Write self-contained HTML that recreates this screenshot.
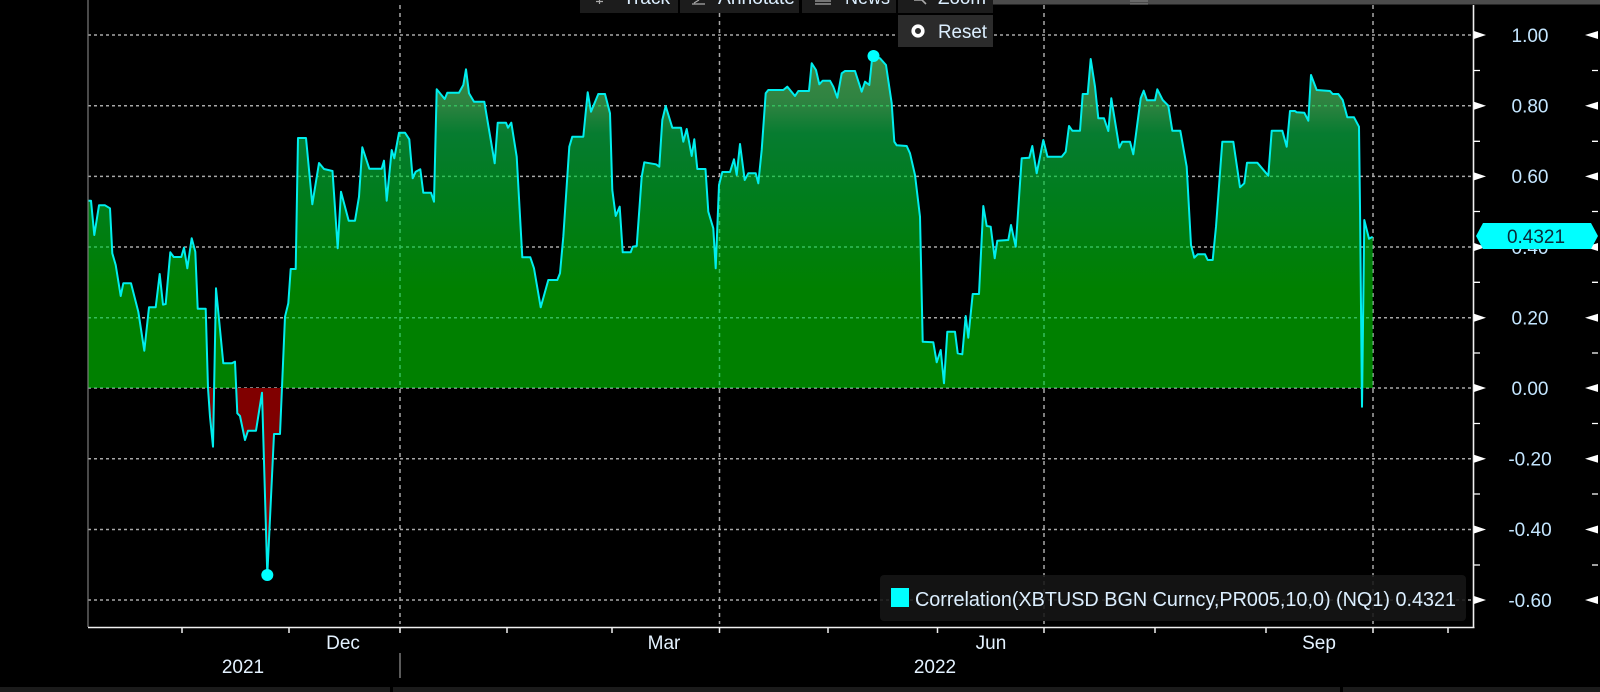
<!DOCTYPE html>
<html>
<head>
<meta charset="utf-8">
<style>
html,body{margin:0;padding:0;background:#000;width:1600px;height:692px;overflow:hidden}
svg{display:block;filter:blur(0.35px)}
text{font-family:"Liberation Sans",sans-serif;font-size:19px;fill:#dcefff}
.y{text-anchor:middle;fill:#c4e6ff}
.x{text-anchor:middle;fill:#e4f2ff}
</style>
</head>
<body>
<svg width="1600" height="692" viewBox="0 0 1600 692" xmlns="http://www.w3.org/2000/svg">
<defs>
<linearGradient id="g" gradientUnits="userSpaceOnUse" x1="0" y1="60" x2="0" y2="290">
<stop offset="0" stop-color="#3f8a46"/>
<stop offset="0.2" stop-color="#2c8240"/>
<stop offset="0.32" stop-color="#067c30"/>
<stop offset="0.6" stop-color="#007d1c"/>
<stop offset="1" stop-color="#008000"/>
</linearGradient>
<path id="area" d="M88,388 L88.3,200.7 91,200.7 94.3,235 99,205.3 105,205.3 110,208.3 112.3,253.3 115.7,265 120.7,296 123.3,283.3 131,283.3 138.3,311.7 144.3,350.7 149,307.3 155.7,307.3 159.7,274 163,304.7 165.7,304 170.3,252.3 173.7,257 181.3,257 184,247.7 187.3,268.3 191.7,238.3 195.3,251.7 197.7,308.7 205.7,308.7 208,388 210,416.7 213,446.7 216,288.3 223.3,363.3 231.7,363.3 235,361.7 237.3,413.3 240,416 245,440 248,430.7 256,430.7 262,392.7 267.3,575 274,434 280,434 285,316.7 288.3,303.3 290.7,269 295.7,269 298,138 306,138 312.3,204.3 319,163 324,169 332.5,171 337.7,248.3 341,191.7 348.7,220.7 355,220.7 359,196.7 362.3,147.3 369.3,168.7 381.7,168.7 384,160.7 386.7,200.7 391.7,150 394.3,158.3 399,132.7 405,132.7 409.3,139.3 412.7,178.3 415.7,171.7 420.3,169.3 423.3,192.7 431,192.7 434,201.7 436.7,89.3 444.7,99 447.3,92.7 459,92.7 463.3,85 466,69.3 469,93.3 474,101.7 484.3,101.7 494.7,163.3 497.7,122.7 506,122.7 508,127.7 511.3,122.7 516.7,156.7 522.3,257.3 530.3,257.3 534,268.3 540.7,307.3 548.3,280 557.3,280 560,273.3 563.3,236.7 569.3,146.7 572.3,136.7 583.3,136.7 587.7,92.3 591,111.7 598.3,94 605,94 610,113.3 612.3,190 615.7,216 619.7,206.7 622.7,252.3 630.7,252.3 632.7,246.7 636.7,246 641.7,176.7 644.3,162.3 656,164.3 659.3,166.7 662.3,120 665.7,106 672.3,127.7 681,127.7 683.3,141.7 686.7,129 691.7,156 694.3,139.3 697.3,169 705.5,169 708.3,211.7 713.3,228.3 715.7,268.3 719,185 722.3,172 730,172 734,159.3 736.7,175 740,144 744.7,180 748.3,173.3 755.7,173.3 758.3,183.3 761.7,150 765.7,93.3 768.3,90 783.3,90 787.3,86.7 795,96 798.3,91 809,91 811.7,63.3 816,70 819.3,84.3 822.7,80.7 830,80.7 833.3,86.7 837.3,97.7 841.7,73.3 845,71 855,71 861.7,91.7 865,81.7 869.3,85 872.3,56.7 873.5,56 880,58.3 886,65 891.7,103.3 894.3,141.7 896.7,145.3 906.7,146 910,153.3 915,175 920,216.7 922.7,341.7 933.3,342.3 936.7,362.3 940.7,350 944,383.3 947.3,331.7 955,331.7 957.7,353.3 962.3,354.3 965.7,316 968.3,337.7 972.7,294 979,294 983.3,206 986.7,226 990.7,226.7 994.7,258.3 997.3,240.7 1008.3,240 1011,225 1015.7,246.7 1021.7,158.3 1029.3,157.7 1032.3,146 1036.7,173.3 1043.3,140 1047.5,156.7 1061.7,156.7 1065.7,151.7 1069,126 1072.3,130.7 1080,130.7 1082.7,94 1087.7,94 1090.7,59 1095,86.7 1098.3,118.3 1104,118.3 1108.3,131 1111.3,98.3 1119.3,147.7 1122.3,141.7 1130,141.7 1133.3,154.3 1140.7,98.3 1143.7,90.7 1147,100.3 1155,100.3 1157.3,89.3 1162.7,100 1168.3,105.7 1172.3,130.7 1180.3,130.7 1186.7,166.7 1191,245 1194.3,257.7 1197.7,254.3 1205,254.3 1207.7,260 1212.7,260 1216,226.7 1222.3,141.7 1233.3,141.7 1240,187.3 1244.3,183.3 1247,162.7 1257.3,162.7 1268.3,175.7 1271.7,130.7 1282.3,130.7 1286.7,146.7 1290,111 1295,111 1296.7,112.3 1304.3,112.7 1308.3,120.7 1311,75 1316.7,90 1330,91 1332.7,94 1338.3,94 1342.7,100 1347.3,117.3 1354,117.3 1359,126.7 1360,206.7 1362,406.7 1364.3,220 1369,238.8 1372.7,236.7 L1372.7,388 Z"/>
<clipPath id="up"><rect x="88" y="0" width="1290" height="388"/></clipPath>
<clipPath id="dn"><rect x="88" y="388" width="1290" height="200"/></clipPath>
<clipPath id="areaClip"><use href="#area"/></clipPath>
<clipPath id="topClip"><rect x="0" y="0" width="1600" height="20"/></clipPath>
<g id="grid">
<path d="M88,35H1473M88,105.7H1473M88,176.4H1473M88,247H1473M88,317.7H1473M88,388H1473M88,458.7H1473M88,529.5H1473M88,600H1473" stroke-dasharray="3 3"/>
<path d="M400,5V624M719.5,5V624M1044,5V624M1373,5V624" stroke-dasharray="4 4"/>
</g>
</defs>

<rect width="1600" height="692" fill="#000"/>

<!-- top bar -->
<rect x="993" y="0" width="607" height="4.5" fill="#4b4b4b"/>
<path d="M1130,1H1148M1130,4H1148" stroke="#8a8a8a" stroke-width="1"/>

<!-- grid -->
<use href="#grid" fill="none" stroke="#a8a8a8" stroke-width="1.5"/>

<!-- fills -->
<g clip-path="url(#up)"><use href="#area" fill="url(#g)"/></g>
<g clip-path="url(#dn)"><use href="#area" fill="#800000"/></g>

<!-- grid over green -->
<g clip-path="url(#up)"><g clip-path="url(#areaClip)">
<use href="#grid" fill="none" stroke="#35bd5c" stroke-width="1.5"/>
</g></g>

<!-- line -->
<polyline fill="none" stroke="#00eeee" stroke-width="2" stroke-linejoin="round" points="88.3,200.7 91,200.7 94.3,235 99,205.3 105,205.3 110,208.3 112.3,253.3 115.7,265 120.7,296 123.3,283.3 131,283.3 138.3,311.7 144.3,350.7 149,307.3 155.7,307.3 159.7,274 163,304.7 165.7,304 170.3,252.3 173.7,257 181.3,257 184,247.7 187.3,268.3 191.7,238.3 195.3,251.7 197.7,308.7 205.7,308.7 208,388 210,416.7 213,446.7 216,288.3 223.3,363.3 231.7,363.3 235,361.7 237.3,413.3 240,416 245,440 248,430.7 256,430.7 262,392.7 267.3,575 274,434 280,434 285,316.7 288.3,303.3 290.7,269 295.7,269 298,138 306,138 312.3,204.3 319,163 324,169 332.5,171 337.7,248.3 341,191.7 348.7,220.7 355,220.7 359,196.7 362.3,147.3 369.3,168.7 381.7,168.7 384,160.7 386.7,200.7 391.7,150 394.3,158.3 399,132.7 405,132.7 409.3,139.3 412.7,178.3 415.7,171.7 420.3,169.3 423.3,192.7 431,192.7 434,201.7 436.7,89.3 444.7,99 447.3,92.7 459,92.7 463.3,85 466,69.3 469,93.3 474,101.7 484.3,101.7 494.7,163.3 497.7,122.7 506,122.7 508,127.7 511.3,122.7 516.7,156.7 522.3,257.3 530.3,257.3 534,268.3 540.7,307.3 548.3,280 557.3,280 560,273.3 563.3,236.7 569.3,146.7 572.3,136.7 583.3,136.7 587.7,92.3 591,111.7 598.3,94 605,94 610,113.3 612.3,190 615.7,216 619.7,206.7 622.7,252.3 630.7,252.3 632.7,246.7 636.7,246 641.7,176.7 644.3,162.3 656,164.3 659.3,166.7 662.3,120 665.7,106 672.3,127.7 681,127.7 683.3,141.7 686.7,129 691.7,156 694.3,139.3 697.3,169 705.5,169 708.3,211.7 713.3,228.3 715.7,268.3 719,185 722.3,172 730,172 734,159.3 736.7,175 740,144 744.7,180 748.3,173.3 755.7,173.3 758.3,183.3 761.7,150 765.7,93.3 768.3,90 783.3,90 787.3,86.7 795,96 798.3,91 809,91 811.7,63.3 816,70 819.3,84.3 822.7,80.7 830,80.7 833.3,86.7 837.3,97.7 841.7,73.3 845,71 855,71 861.7,91.7 865,81.7 869.3,85 872.3,56.7 873.5,56 880,58.3 886,65 891.7,103.3 894.3,141.7 896.7,145.3 906.7,146 910,153.3 915,175 920,216.7 922.7,341.7 933.3,342.3 936.7,362.3 940.7,350 944,383.3 947.3,331.7 955,331.7 957.7,353.3 962.3,354.3 965.7,316 968.3,337.7 972.7,294 979,294 983.3,206 986.7,226 990.7,226.7 994.7,258.3 997.3,240.7 1008.3,240 1011,225 1015.7,246.7 1021.7,158.3 1029.3,157.7 1032.3,146 1036.7,173.3 1043.3,140 1047.5,156.7 1061.7,156.7 1065.7,151.7 1069,126 1072.3,130.7 1080,130.7 1082.7,94 1087.7,94 1090.7,59 1095,86.7 1098.3,118.3 1104,118.3 1108.3,131 1111.3,98.3 1119.3,147.7 1122.3,141.7 1130,141.7 1133.3,154.3 1140.7,98.3 1143.7,90.7 1147,100.3 1155,100.3 1157.3,89.3 1162.7,100 1168.3,105.7 1172.3,130.7 1180.3,130.7 1186.7,166.7 1191,245 1194.3,257.7 1197.7,254.3 1205,254.3 1207.7,260 1212.7,260 1216,226.7 1222.3,141.7 1233.3,141.7 1240,187.3 1244.3,183.3 1247,162.7 1257.3,162.7 1268.3,175.7 1271.7,130.7 1282.3,130.7 1286.7,146.7 1290,111 1295,111 1296.7,112.3 1304.3,112.7 1308.3,120.7 1311,75 1316.7,90 1330,91 1332.7,94 1338.3,94 1342.7,100 1347.3,117.3 1354,117.3 1359,126.7 1360,206.7 1362,406.7 1364.3,220 1369,238.8 1372.7,236.7"/>
<circle cx="267.3" cy="575" r="6" fill="#00ffff"/>
<circle cx="873.5" cy="56" r="6" fill="#00ffff"/>

<!-- axes -->
<path d="M88,0V627" stroke="#7a7a7a" stroke-width="1.2"/>
<path d="M88,627.5H1474.5" stroke="#f0f0f0" stroke-width="1.6"/>
<path d="M1473.5,5V628" stroke="#f0f0f0" stroke-width="1.6"/>

<!-- bottom ticks -->
<path d="M182,628V633M289,628V633M400,628V633M507,628V633M612,628V633M719.5,628V633M828,628V633M937.5,628V633M1044,628V633M1155,628V633M1266,628V633M1373,628V633M1448,628V633" stroke="#f0f0f0" stroke-width="1.5"/>

<!-- right axis triangles -->
<g fill="#fff">
<path d="M1474,31L1486,35L1474,39ZM1474,101.7L1486,105.7L1474,109.7ZM1474,172.4L1486,176.4L1474,180.4ZM1474,243L1486,247L1474,251ZM1474,313.7L1486,317.7L1474,321.7ZM1474,384L1486,388L1474,392ZM1474,454.7L1486,458.7L1474,462.7ZM1474,525.5L1486,529.5L1474,533.5ZM1474,596L1486,600L1474,604Z"/>
<path d="M1598,31L1585,35L1598,39ZM1598,101.7L1585,105.7L1598,109.7ZM1598,172.4L1585,176.4L1598,180.4ZM1598,243L1585,247L1598,251ZM1598,313.7L1585,317.7L1598,321.7ZM1598,384L1585,388L1598,392ZM1598,454.7L1585,458.7L1598,462.7ZM1598,525.5L1585,529.5L1598,533.5ZM1598,596L1585,600L1598,604Z"/>
</g>
<path d="M1474,70.5H1480M1474,141.3H1480M1474,211.5H1480M1474,282.3H1480M1474,353H1480M1474,423.5H1480M1474,494H1480M1474,565H1480M1592,70.5H1598M1592,141.3H1598M1592,211.5H1598M1592,282.3H1598M1592,353H1598M1592,423.5H1598M1592,494H1598M1592,565H1598" stroke="#fff" stroke-width="1.3"/>

<!-- y labels -->
<text class="y" x="1530" y="42">1.00</text>
<text class="y" x="1530" y="112.5">0.80</text>
<text class="y" x="1530" y="183">0.60</text>
<text class="y" x="1530" y="254">0.40</text>
<text class="y" x="1530" y="324.5">0.20</text>
<text class="y" x="1530" y="395">0.00</text>
<text class="y" x="1530" y="465.5">-0.20</text>
<text class="y" x="1530" y="536">-0.40</text>
<text class="y" x="1530" y="607">-0.60</text>

<!-- value tag -->
<polygon points="1476,236 1483,223 1591,223 1598,236 1591,249 1483,249" fill="#00ffff"/>
<text x="1536" y="243" text-anchor="middle" style="fill:#0a2a38">0.4321</text>

<!-- x labels -->
<text class="x" x="343" y="649">Dec</text>
<text class="x" x="664" y="649">Mar</text>
<text class="x" x="991" y="649">Jun</text>
<text class="x" x="1319" y="649">Sep</text>
<text class="x" x="243" y="673">2021</text>
<text class="x" x="935" y="673">2022</text>
<path d="M400,653V678" stroke="#8a8a8a" stroke-width="1.3"/>

<!-- legend -->
<rect x="880" y="575" width="586" height="46" rx="4" fill="#161616" fill-opacity="0.88"/>
<rect x="891" y="588" width="18" height="19" fill="#00ffff"/>
<text x="915" y="606" textLength="541" lengthAdjust="spacingAndGlyphs" style="font-size:20.5px">Correlation(XBTUSD BGN Curncy,PR005,10,0) (NQ1) 0.4321</text>

<!-- toolbar buttons -->
<g clip-path="url(#topClip)">
<rect x="580" y="0" width="98" height="13" fill="#1c1c1c"/>
<rect x="680" y="0" width="119" height="13" fill="#1c1c1c"/>
<rect x="802" y="0" width="94" height="13" fill="#1c1c1c"/>
<rect x="898" y="0" width="95" height="13" fill="#1c1c1c"/>
<path d="M599.5,0V4M596,1.5H603" stroke="#aaa" stroke-width="1.2"/>
<path d="M692,4H705M694,3L699,0" stroke="#aaa" stroke-width="1.2"/>
<path d="M815,1H831M815,4H831" stroke="#aaa" stroke-width="1.2"/>
<path d="M914,0L922,0L926,4" stroke="#aaa" stroke-width="1.6" fill="none"/>
<text x="623" y="4" textLength="47" lengthAdjust="spacingAndGlyphs">Track</text>
<text x="718" y="4" textLength="77" lengthAdjust="spacingAndGlyphs">Annotate</text>
<text x="845" y="4" textLength="45" lengthAdjust="spacingAndGlyphs">News</text>
<text x="938" y="4" textLength="48" lengthAdjust="spacingAndGlyphs">Zoom</text>
</g>

<!-- reset button -->
<rect x="898" y="15" width="95" height="32" fill="#2b2b2b"/>
<circle cx="918" cy="31" r="4.8" fill="none" stroke="#fff" stroke-width="3.6"/>
<text x="938" y="38" textLength="49" lengthAdjust="spacingAndGlyphs">Reset</text>

<!-- bottom strip -->
<rect x="0" y="687" width="390" height="5" fill="#1b1b1b"/>
<rect x="393" y="687" width="947" height="5" fill="#1b1b1b"/>
<rect x="1343" y="687" width="257" height="5" fill="#1b1b1b"/>
</svg>
</body>
</html>
